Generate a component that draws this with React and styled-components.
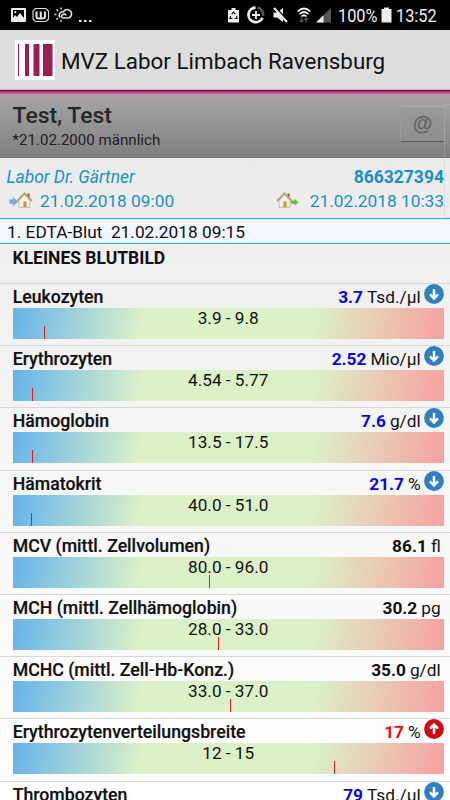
import React from 'react'
import styled, { createGlobalStyle } from 'styled-components'

const GlobalStyle = createGlobalStyle`
  * { box-sizing : border-box; }
  body {
    margin : 0;
    background : #fff;
    font-family : Roboto, "Liberation Sans", sans-serif;
  }
`

const Screen = styled.div`
  position : relative;
  width : 450px;
  height : 800px;
  overflow : hidden;
  display : flex;
  flex-direction : column;
  color : #111;
  background : linear-gradient(#ebebeb 158px, #f1f1f1 300px, #fff 800px);

  > * { flex-shrink : 0; }
`

const StatusBar = styled.header`
  height : 30px;
  background : #000;
  color : #eee;
  display : flex;
  justify-content : space-between;
  svg { display : block; }
`

const StatusRight = styled.div`
  display : flex;
`

const StatusText = styled.span`
  width : ${props => props.$width}px;
  line-height : 32px;
  font-size : 18.8px;
  white-space : nowrap;
  transform : scaleX(0.87);
  transform-origin : left;
`

const AppBar = styled.div`
  height : 60px;
  padding : 10px 15px 0;
  background : #ddd;
  border-bottom : 1px solid #b5b0b3;
  display : flex;
  gap : 6px;
`

const Logo = styled.svg`
  width : 40px;
  height : 40px;
`

const Title = styled.h1`
  margin : 0;
  font-size : 22.4px;
  font-weight : 400;
  line-height : 43px;
  white-space : nowrap;
`

const PatientHeader = styled.section`
  height : 68px;
  padding : 12px 5px 0 12.5px;
  display : flex;
  justify-content : space-between;
  background : linear-gradient(#8f0c50 0 1px, #a9487c 2px, #b59cab 5px, #a5a2a4 9px, #a0a0a0 14px, #808080 66px);
  border-bottom : 1px solid #747474;
`

const PatientName = styled.div`
  color : #272727;
  font-size : 22.9px;
  font-weight : 500;
  line-height : 28px;
`

const PatientInfo = styled.div`
  color : #202020;
  font-size : 15.1px;
  line-height : 21px;
`

const MailButton = styled.button`
  width : 45px;
  height : 36px;
  margin : 4px 0 0;
  padding : 0 0 2px;
  border : 1px solid #999;
  border-top-color : #b0b0b0;
  border-bottom-color : #555;
  border-radius : 2px;
  background : linear-gradient(#9a9a9a, #8e8e8e);
  color : #626262;
  font : 700 20px "Liberation Sans", sans-serif;
`

const OrderInfo = styled.section`
  height : 60px;
  padding : 7px 6px 0 6.5px;
  color : #1792c8;
  font-size : 17.3px;
`

const OrderLine = styled.div`
  display : flex;
  justify-content : space-between;
  height : 24px;
  line-height : 24px;
  em { font-size : 17.4px; }
  strong { font-size : 17.5px; font-weight : 700; }
`

const OrderDate = styled.span`
  display : flex;
  gap : ${props => props.$gap}px;
  svg { margin-top : 3px; }
`

const SampleBar = styled.div`
  height : 26px;
  padding-left : 7px;
  border : solid #2bb0dc;
  border-width : 1px 0;
  background : #f0f7ff;
  color : #111;
  font-size : 17.3px;
  line-height : 26px;
  white-space : pre;
`

const GroupTitle = styled.h2`
  height : 39px;
  margin : 0;
  padding-left : 12.5px;
  font-size : 17.5px;
  font-weight : 700;
  line-height : 29px;
`

const Row = styled.article`
  height : 62.2px;
  padding : 0 6.3px 0 12.7px;
  border-top : 1px solid #d7d7d7;
`

const RowHead = styled.div`
  height : 24px;
  display : flex;
  font-size : 17.3px;
  line-height : 26px;
  white-space : nowrap;
  svg { display : block; margin-left : 3px; }
`

const Name = styled.span`
  flex : 1;
  font-size : 17.7px;
  font-weight : 500;
  -webkit-text-stroke : 0.2px;
`

const Value = styled.span`
  margin-right : 4px;
  font-weight : 700;
  color : ${props => props.$color || '#111'};
`

const Unit = styled.span`
  margin-right : ${props => props.$flagged ? 0 : 3}px;
`

const RangeBar = styled.div`
  position : relative;
  height : 31px;
  background : linear-gradient(100deg, #69b5ea 1%, #dcf1c8 30%, #dcf1c8 69%, #f6a3a3 99%);
  font-size : 17.2px;
  line-height : 20px;
  text-align : center;
`

const Tick = styled.i`
  position : absolute;
  bottom : 0;
  width : 1.4px;
  height : 13px;
  background : #f41616;
`

const ScrollThumb = styled.div`
  position : absolute;
  top : 104px;
  left : 444px;
  width : 6px;
  height : 114px;
  border-radius : 3px 0 0 3px;
  border : 1px solid rgba(190, 190, 190, 0.35);
  border-right : 0;
`

const results = [
  { name: 'Leukozyten', value: '3.7', unit: 'Tsd./µl', range: '3.9 - 9.8', flag: 'low', tick: 7.2 },
  { name: 'Erythrozyten', value: '2.52', unit: 'Mio/µl', range: '4.54 - 5.77', flag: 'low', tick: 4.4 },
  { name: 'Hämoglobin', value: '7.6', unit: 'g/dl', range: '13.5 - 17.5', flag: 'low', tick: 4.5 },
  { name: 'Hämatokrit', value: '21.7', unit: '%', range: '40.0 - 51.0', flag: 'low', tick: 4.2 },
  { name: 'MCV (mittl. Zellvolumen)', value: '86.1', unit: 'fl', range: '80.0 - 96.0', tick: 45.5 },
  { name: 'MCH (mittl. Zellhämoglobin)', value: '30.2', unit: 'pg', range: '28.0 - 33.0', tick: 47.6 },
  { name: 'MCHC (mittl. Zell-Hb-Konz.)', value: '35.0', unit: 'g/dl', range: '33.0 - 37.0', tick: 50.4 },
  { name: 'Erythrozytenverteilungsbreite', value: '17', unit: '%', range: '12 - 15', flag: 'high', tick: 74.5 },
  { name: 'Thrombozyten', value: '79', unit: 'Tsd./µl', flag: 'low' },
]

const valueColors = { low: '#0505f0', high: '#f80808' }

function FlagIcon({ flag }) {
  const high = flag === 'high'
  return (
    <svg width="20" height="21" viewBox="0 0 20 21">
      <circle cx="10" cy="10" r="9.9" fill={high ? '#cf0a10' : '#2f7fc1'} />
      <path d="M10 5V14.500M6 10.400L10 14.400l4-4" fill="none" stroke="#fff" strokeWidth="2.500"
        transform={high ? 'rotate(180 10 10)' : undefined} />
    </svg>
  )
}

function House() {
  return (
    <g>
      <path d="M3 8.5V15.3h11V8.5L8.5 2.5z" fill="#f4f1ee" stroke="#b4a9a3" strokeWidth=".8" />
      <path d="M11.5 1.5h2v4h-2z" fill="#8e5a3a" />
      <path d="M1 9L8.5 1.4 16 9" fill="none" stroke="#c0a264" strokeWidth="1.9" />
      <path d="M7.4 9.5h3.2v5.6H7.4z" fill="#d9951c" />
    </g>
  )
}

function StatusLeftIcons() {
  return (
    <svg width="100" height="30" viewBox="0 0 100 30">
      <rect x="11" y="8" width="15" height="14" rx="1" fill="#eee" />
      <path d="M13 10h11v8l-4-5-3 4-2-2-2 3z" fill="#000" />
      <circle cx="15.3" cy="12.2" r="1.1" fill="#eee" />
      <g fill="none" stroke="#ddd">
        <path d="M35.500 8.500h10l3 2.500v8l-2.500 2.500h-10.500l-2.500-2.500v-8z" strokeWidth="1.1" />
        <path d="M36.500 11.500v5q0 2 2 2h3.500q3 0 3-2v-5M40.800 11.500v6" strokeWidth="2.1" />
        <path d="M63 11.800a3.500 3.500 0 0 0-3 5.700M63 18c-3.500-1.500 0-5.500 3.500-2.800M62.500 18h5a4.200 4.200 0 1 0-4.200-5.500" strokeWidth="1.6" />
        <path d="M61 7.500v2M56.500 9.500l1.500 1.500M54.500 14.500h2M56.500 19.500l1.500-1.500M61 19.800v2" strokeWidth="1.5" />
      </g>
      <path d="M79 20h2.500v2H79zM84 20h2.500v2H84zM89 20h2.500v2H89z" fill="#eee" />
    </svg>
  )
}

function StatusRightIcons() {
  return (
    <svg width="113" height="30" viewBox="225 0 113 30">
      <path d="M231.500 8h4v2h3.500v12.500h-11V10h3.500z" fill="#eee" />
      <path d="M231.700 14.200l1.800-2.200 1.800 2.200M236.500 16l.6 2.500h-2.500M232.400 18.500h-2.500l.7-2.500" fill="none" stroke="#000" strokeWidth="1.1" />
      <g fill="none">
        <path d="M255.500 7.500a7.300 7.300 0 1 0 7 10.200" stroke="#eee" strokeWidth="2.800" />
        <path d="M257.500 7.500a7.300 7.300 0 0 1 5.500 8.500" stroke="#555" strokeWidth="2.800" />
        <path d="M252 15h8M256 11v8" stroke="#eee" strokeWidth="1.800" />
      </g>
      <path d="M273.500 12.500h3.500l6-4.500v14l-6-4.500h-3.500z" fill="#eee" />
      <path d="M275.500 7.500l13 14" stroke="#000" strokeWidth="1.800" />
      <path d="M274 8l13 14" stroke="#eee" strokeWidth="2" />
      <g fill="none" stroke="#eee" strokeWidth="1.700">
        <path d="M297.500 11.500q6.500-6 13 0M299.500 14q4.500-4 9 0M301.500 16.500q2.500-2.500 5 0" />
      </g>
      <path d="M301.500 17.500v4.500M299.700 20l1.800 2 1.800-2M306.200 22.500V18M304.500 20l1.700-2 1.800 2" fill="none" stroke="#555" strokeWidth="1.300" />
      <path d="M316 22.500L331 8v14.500z" fill="#555" />
      <path d="M316 22.500l7.500-7.300v7.300z" fill="#eee" />
    </svg>
  )
}

export default function App() {
  return (
    <Screen>
      <GlobalStyle />
      <StatusBar>
        <StatusLeftIcons />
        <StatusRight>
          <StatusRightIcons />
          <StatusText $width={43}>100%</StatusText>
          <svg width="15" height="30" viewBox="0 0 15 30">
            <path d="M3 7.500h5V9h2.500v13.500H.500V9H3z" fill="#eee" />
          </svg>
          <StatusText $width={54}>13:52</StatusText>
        </StatusRight>
      </StatusBar>

      <AppBar>
        <Logo viewBox="0 0 40 40">
          <path d="M0 0h40v40H0z" fill="#fff" />
          <path d="M3 4h1v32H3zM10 4h4v32h-4zM18.500 4h6v32h-6zM28 4h9.500v32H28z" fill="#9c1d54" />
        </Logo>
        <Title>MVZ Labor Limbach Ravensburg</Title>
      </AppBar>

      <PatientHeader>
        <div>
          <PatientName>Test, Test</PatientName>
          <PatientInfo>*21.02.2000 männlich</PatientInfo>
        </div>
        <MailButton>@</MailButton>
      </PatientHeader>

      <OrderInfo>
        <OrderLine>
          <em>Labor Dr. Gärtner</em>
          <strong>866327394</strong>
        </OrderLine>
        <OrderLine>
          <OrderDate $gap={6.5}>
            <svg width="27" height="17" viewBox="-9 0 27 17">
              <House />
              <path d="M-6.500 7.500h3.500V5l5 4.700-5 4.600v-2.500h-3.500z" fill="#7fa6e0" stroke="#a9c0e8" strokeWidth=".5" />
            </svg>
            21.02.2018 09:00
          </OrderDate>
          <OrderDate $gap={10}>
            <svg width="24" height="17" viewBox="0 0 24 17">
              <House />
              <path d="M15 8.800h3.500V6.800l4 3.500-4 3.500v-2H15z" fill="#5bc236" />
            </svg>
            21.02.2018 10:33
          </OrderDate>
        </OrderLine>
      </OrderInfo>

      <SampleBar>{'1. EDTA-Blut  21.02.2018 09:15'}</SampleBar>
      <GroupTitle>KLEINES BLUTBILD</GroupTitle>

      {results.map(result =>
        <Row key={result.name}>
          <RowHead>
            <Name>{result.name}</Name>
            <Value $color={valueColors[result.flag]}>{result.value}</Value>
            <Unit $flagged={!!result.flag}>{result.unit}</Unit>
            {result.flag && <FlagIcon flag={result.flag} />}
          </RowHead>
          {result.range && <RangeBar>
            {result.range}
            <Tick style={{ left: `${result.tick}%` }} />
          </RangeBar>}
        </Row>
      )}
      <ScrollThumb />
    </Screen>
  )
}
